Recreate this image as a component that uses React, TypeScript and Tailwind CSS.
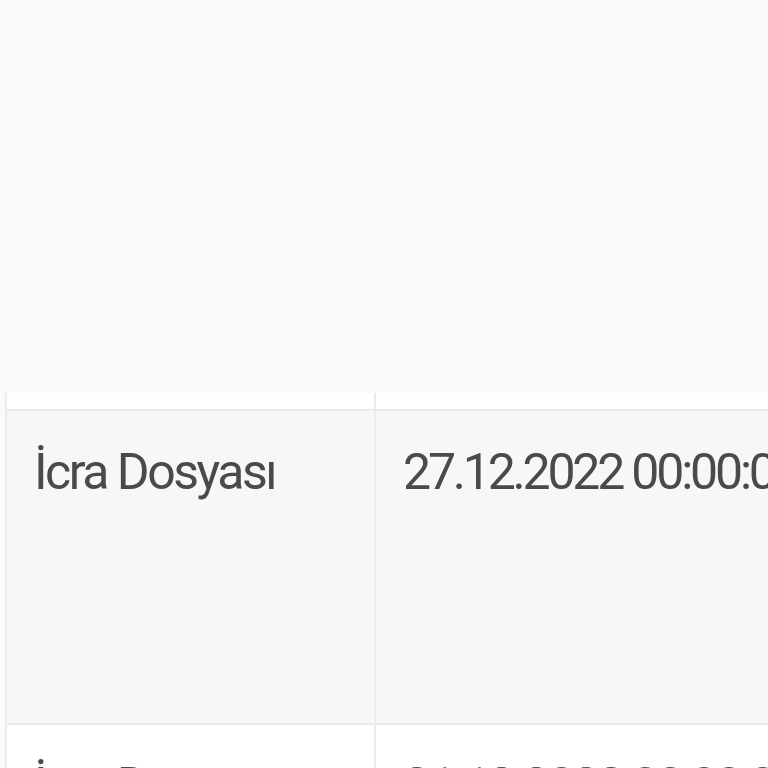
export default function App() {
  const rows = [
    { type: "", date: "", bg: "bg-white", h: "h-[18px]" },
    { type: "İcra Dosyası", date: "27.12.2022 00:00:00", bg: "bg-[#f7f7f7]", h: "h-[314px]" },
    { type: "İcra Dosyası", date: "21.12.2022 00:00:00", bg: "bg-white", h: "h-[314px]" },
  ];

  return (
    <div className="h-[768px] w-[768px] overflow-hidden bg-[#fafafa] font-['Roboto',sans-serif]">
      {/* boş üst alan */}
      <div className="h-[393px]" />

      {/* tablo */}
      <div className="ml-[5px] border-l-2 border-[#ececec]">
        {rows.map((r, i) => (
          <div
            key={i}
            className={`grid grid-cols-[369px_1fr] border-b-2 border-[#ebebeb] ${r.bg} ${r.h}`}
          >
            <div className="border-r-2 border-[#ececec] pl-[27px] pt-[31px] text-[50px] leading-[60px] tracking-[-2.5px] text-[#4a4a4a] whitespace-nowrap overflow-hidden">
              {r.type}
            </div>
            <div className="pl-[27px] pt-[31px] text-[50px] leading-[60px] tracking-[-3.2px] text-[#4a4a4a] whitespace-nowrap overflow-hidden">
              {r.date}
            </div>
          </div>
        ))}
      </div>
    </div>
  );
}
